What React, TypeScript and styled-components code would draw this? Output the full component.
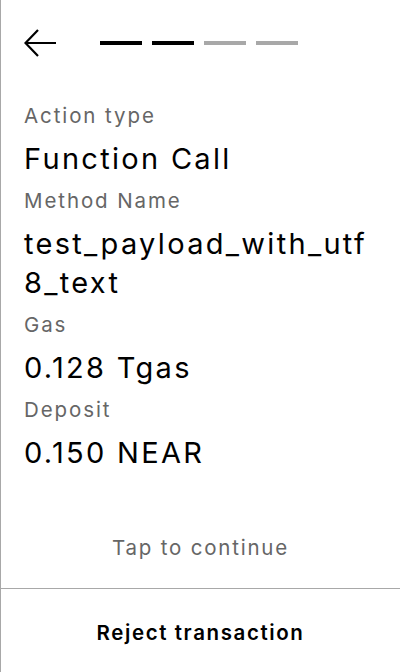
import React from 'react';
import styled, { createGlobalStyle } from 'styled-components';

const GlobalStyle = createGlobalStyle`
  html, body {
    margin: 0;
    padding: 0;
    background: #ffffff;
  }
  body {
    font-family: 'Inter', 'Noto Sans', sans-serif;
    color: #000000;
  }
  * {
    box-sizing: border-box;
  }
`;

const Screen = styled.div`
  display: flex;
  flex-direction: column;
  width: 400px;
  height: 672px;
  border-left: 1px solid #a8a8a8;
  background: #ffffff;
`;

const Header = styled.div`
  display: flex;
  align-items: center;
  gap: 44px;
  height: 40px;
  margin-top: 23px;
  padding-left: 23px;
`;

const BackButton = styled.button`
  display: flex;
  align-items: center;
  justify-content: center;
  width: 32px;
  height: 28px;
  padding: 0;
  border: none;
  background: none;
  cursor: pointer;
`;

const Steps = styled.div`
  display: flex;
  gap: 10px;
`;

const Step = styled.div<{ $done: boolean }>`
  width: 42px;
  height: 4px;
  background: ${(p) => (p.$done ? '#000000' : '#a8a8a8')};
`;

const Details = styled.div`
  display: flex;
  flex-direction: column;
  gap: 8px;
  flex: 1;
  margin-top: 38px;
  padding: 0 22px 0 23px;
`;

const Label = styled.div`
  font-size: 20.5px;
  line-height: 30px;
  letter-spacing: 1.9px;
  color: #666666;
`;

const Value = styled.div`
  font-size: 29px;
  line-height: 39px;
  letter-spacing: 2.3px;
  color: #000000;
  word-break: break-all;
`;

const TapHint = styled.div`
  padding-bottom: 26px;
  font-size: 20.5px;
  line-height: 28px;
  letter-spacing: 1.8px;
  color: #666666;
  text-align: center;
`;

const RejectButton = styled.button`
  height: 84px;
  width: 100%;
  padding: 3px 0 0;
  border: none;
  border-top: 1px solid #a8a8a8;
  background: #ffffff;
  font-family: 'Inter', 'Noto Sans', sans-serif;
  font-size: 20.5px;
  font-weight: 600;
  letter-spacing: 1.6px;
  color: #000000;
  cursor: pointer;
`;

const fields = [
  { label: 'Action type', value: 'Function Call' },
  { label: 'Method Name', value: 'test_payload_with_utf8_text' },
  { label: 'Gas', value: '0.128 Tgas' },
  { label: 'Deposit', value: '0.150 NEAR' },
];

const App: React.FC = () => {
  const step = 2;
  return (
    <>
      <GlobalStyle />
      <Screen>
        <Header>
          <BackButton aria-label="Back">
            <svg width="32" height="28" viewBox="0 0 32 28" fill="none">
              <path
                d="M32 14H2M14 1L1.5 14L14 27"
                stroke="#000000"
                strokeWidth="2.2"
              />
            </svg>
          </BackButton>
          <Steps>
            {[0, 1, 2, 3].map((i) => (
              <Step key={i} $done={i < step} />
            ))}
          </Steps>
        </Header>
        <Details>
          {fields.map((f) => (
            <React.Fragment key={f.label}>
              <Label>{f.label}</Label>
              <Value>{f.value}</Value>
            </React.Fragment>
          ))}
        </Details>
        <TapHint>Tap to continue</TapHint>
        <RejectButton>Reject transaction</RejectButton>
      </Screen>
    </>
  );
};

export default App;
